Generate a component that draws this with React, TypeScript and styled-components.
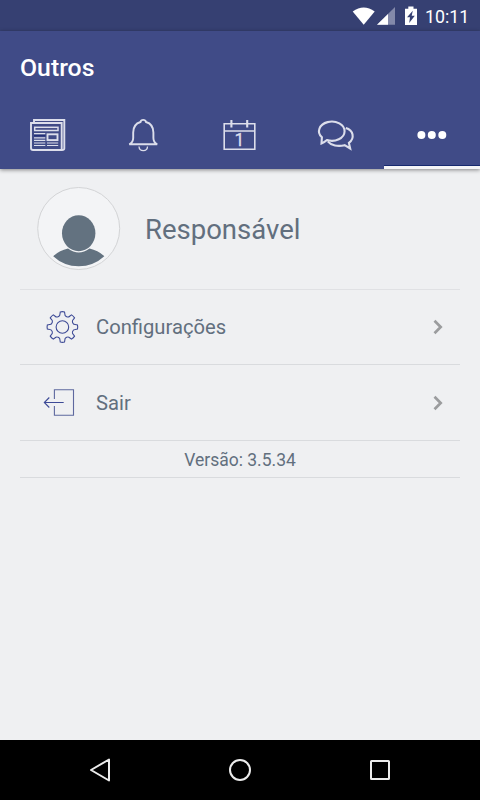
import React from "react";
import styled, { createGlobalStyle } from "styled-components";

const GlobalStyle = createGlobalStyle`
  * { box-sizing: border-box; }
  body { margin: 0; background: #eff0f2; font-family: Roboto, "Noto Sans", sans-serif; }
  svg { display: block; flex: none; }
`;

const Screen = styled.div`
  width: 480px;
  height: 800px;
  display: flex;
  flex-direction: column;
  background: #eff0f2;
  color: #626f7e;
  overflow: hidden;
`;

const StatusBar = styled.div`
  height: 31px;
  flex: none;
  display: flex;
  align-items: center;
  justify-content: flex-end;
  padding-right: 11px;
  background: #364072;
`;

const Clock = styled.time`
  width: 44px;
  margin-left: 7px;
  padding-top: 2px;
  font-size: 17.8px;
  font-weight: 400;
  line-height: 22px;
  color: #fff;
  white-space: nowrap;
`;

const Header = styled.header`
  height: 138px;
  flex: none;
  background: #404b87;
  box-shadow: 0 1px 4px rgba(0, 0, 0, 0.45);
`;

const Title = styled.h1`
  margin: 0;
  height: 71px;
  padding: 1px 20px 0;
  line-height: 71px;
  font-size: 24.8px;
  font-weight: 500;
  color: #fff;
`;

const Tabs = styled.nav`
  display: flex;
  height: 67px;
`;

const Tab = styled.div<{ $active?: boolean }>`
  flex: 1;
  display: flex;
  justify-content: center;
  padding-top: 13px;
  border-bottom: ${(p) => (p.$active ? "3px solid #f5f5f6" : "none")};
  box-shadow: ${(p) => (p.$active ? "inset 0 -1px #17296e" : "none")};
`;

const Content = styled.main`
  flex: 1;
  padding: 0 20px;
`;

const Profile = styled.section`
  height: 121px;
  display: flex;
  padding: 18px 0 0 17px;
  border-bottom: 1px solid #e0e1e4;
`;

const Name = styled.div`
  margin: 25px 0 0 24px;
  font-size: 27.5px;
  line-height: 36px;
`;

const Row = styled.div<{ $height: number }>`
  height: ${(p) => p.$height}px;
  display: flex;
  align-items: center;
  padding: 0 14px 0 22px;
  border-bottom: 1px solid #d9dbde;
`;

const RowLabel = styled.span`
  flex: 1;
  margin-left: 14px;
  font-size: 20.2px;
  line-height: 26px;
`;

const Version = styled.div`
  height: 37px;
  padding-top: 1px;
  border-bottom: 1px solid #d9dbde;
  text-align: center;
  font-size: 17.5px;
  line-height: 36px;
`;

const NavBar = styled.footer`
  height: 60px;
  flex: none;
  display: flex;
  justify-content: space-around;
  align-items: center;
  padding: 0 30px;
  background: #000;
`;

const TabIcon = ({ children }: { children: React.ReactNode }) => (
  <svg width="40" height="40" viewBox="0 0 40 40" fill="none" stroke="#dcdeeb" strokeWidth="1.9">
    {children}
  </svg>
);

const gearPath = (() => {
  const point = (r: number, deg: number) => {
    const a = (deg * Math.PI) / 180;
    return `${(20.4 + r * Math.sin(a)).toFixed(2)} ${(20 - r * Math.cos(a)).toFixed(2)}`;
  };
  let d = `M${point(15.2, -8)}`;
  for (let i = 0; i < 8; i++) {
    const c = i * 45;
    d += `Q${point(15.6, c)} ${point(15.2, c + 8)}`;
    d += `L${point(13, c + 11)}`;
    d += `Q${point(11.4, c + 13)} ${point(11.3, c + 18)}`;
    d += `Q${point(11, c + 22.5)} ${point(11.3, c + 27)}`;
    d += `Q${point(11.4, c + 32)} ${point(13, c + 34)}`;
    d += `L${point(15.2, c + 37)}`;
  }
  return d + "Z";
})();

const Chevron = () => (
  <svg width="16" height="20" viewBox="0 0 16 20" fill="none" stroke="#9b9c9e" strokeWidth="2.7">
    <path d="M4.5 3.7 10.7 10 4.5 16.3" />
  </svg>
);

export default function App() {
  return (
    <>
      <GlobalStyle />
      <Screen>
        <StatusBar>
          <svg width="66" height="24" viewBox="0 0 66 24">
            <path d="M.7 7.4Q11.7-.4 22.7 7.4L11.7 20.8Z" fill="#fff" />
            <path d="M43 3V20.8H25Z" fill="#8389aa" />
            <path d="M36 10V20.8H25Z" fill="#fff" />
            <path
              d="M53 4.7h3.3V2.5h5.2v2.2H65v16.3H53Z M60.8 6.7 55 13.2h3l-.8 5.8 5.6-7.2h-3.1Z"
              fill="#fff"
              fillRule="evenodd"
            />
          </svg>
          <Clock>10:11</Clock>
        </StatusBar>

        <Header>
          <Title>Outros</Title>
          <Tabs>
            <Tab>
              <TabIcon>
                <path d="M6 7V5H36.3V33.5Q36.3 35 34 35H5Q3 35 3 33V8H33.7V35" />
                <rect x="6.7" y="12.3" width="23.3" height="3.2" strokeWidth="1.5" />
                <rect x="19.5" y="19.3" width="10" height="5.8" />
                <path d="M6 18.6H17.3M6 22.8H17.3" strokeWidth="1.2" />
                <path d="M6 20.7H17.3" stroke="#202d78" strokeWidth="1.2" />
                <path d="M6 25.3H17.3M6 28H17.3M19 28H30.2M6 30.5H17.3M19 30.5H30.2" strokeWidth="1.2" />
              </TabIcon>
            </Tab>
            <Tab>
              <TabIcon>
                <path d="M5.3 29.3H33.2Q29.4 27.2 29.4 23V17.5Q29.4 9.2 22 7Q21.5 4.9 19.2 4.9T16.5 7Q9.2 9.2 9.2 17.5V23Q9.2 27.2 5.3 29.3Z" />
                <path d="M15 31.5C15.3 37 23.3 37 23.5 31.5" strokeWidth="1.3" />
              </TabIcon>
            </Tab>
            <Tab>
              <TabIcon>
                <path d="M4.2 8.8H34.8V34.2H4.2ZM4.2 16H34.8" strokeWidth="1.6" />
                <path d="M11.4 5V12.4M27.2 5V12.4" strokeWidth="2.1" />
                <text x="19.4" y="30.9" textAnchor="middle" fontSize="17.5" fontFamily="Roboto" fill="#dcdeeb" stroke="#dcdeeb" strokeWidth=".3">
                  1
                </text>
              </TabIcon>
            </Tab>
            <Tab>
              <TabIcon>
                <path d="M5.5 28.4 5.9 22.3A12.8 9.6 0 1 1 11 25.1Q8.5 27.4 5.5 28.4Z" strokeWidth="2.1" />
                <path d="M29.8 12.9C37.5 15 39 23.3 32.9 27.9L34.2 33.5 28.6 30.2C22 31.8 15 30.6 11.8 26.4" strokeWidth="2.1" />
              </TabIcon>
            </Tab>
            <Tab $active>
              <TabIcon>
                <g fill="#fff" stroke="none">
                  <circle cx="9.4" cy="20" r="4" />
                  <circle cx="19.8" cy="20" r="4" />
                  <circle cx="30.3" cy="20" r="4" />
                </g>
              </TabIcon>
            </Tab>
          </Tabs>
        </Header>

        <Content>
          <Profile>
            <svg width="84" height="84" viewBox="0 0 84 84">
              <circle cx="41.7" cy="41.5" r="41" fill="#f3f4f6" stroke="#d3d4d6" />
              <path d="M16.2 69.2Q22.5 63.5 31 61.6Q41.7 69.5 52.5 61.6Q61 63.5 67.3 69.2Q56.5 79.2 41.7 79.2T16.2 69.2Z" fill="#637280" />
              <ellipse cx="41.7" cy="46.2" rx="16.7" ry="18" fill="#637280" />
            </svg>
            <Name>Responsável</Name>
          </Profile>
          <Row $height={75}>
            <svg width="40" height="40" viewBox="0 0 40 40" fill="none" stroke="#3d4a96" strokeWidth="1.1">
              <path d={gearPath} />
              <circle cx="20.4" cy="20" r="6.3" />
            </svg>
            <RowLabel>Configurações</RowLabel>
            <Chevron />
          </Row>
          <Row $height={76}>
            <svg width="40" height="40" viewBox="0 0 40 40" fill="none" stroke="#3d4a96" strokeWidth="1.1">
              <path d="M12.4 16V6.8H31.5V32.2H12.4V23" stroke="#5e689f" />
              <path d="M21.7 19.5H2.5M7.3 14.5 2.3 19.5 7.3 24.5" />
            </svg>
            <RowLabel>Sair</RowLabel>
            <Chevron />
          </Row>
          <Version>Versão: 3.5.34</Version>
        </Content>

        <NavBar>
          <svg width="24" height="26" viewBox="0 0 24 26" fill="none" stroke="#ececec" strokeWidth="2">
            <path d="M21 2.5V23.5L3 13Z" strokeLinejoin="round" />
          </svg>
          <svg width="24" height="24" viewBox="0 0 24 24" fill="none" stroke="#ececec" strokeWidth="2">
            <circle cx="12" cy="12" r="10" />
          </svg>
          <svg width="24" height="24" viewBox="0 0 24 24" fill="none" stroke="#ececec" strokeWidth="2">
            <rect x="3" y="3" width="18" height="18" rx=".5" />
          </svg>
        </NavBar>
      </Screen>
    </>
  );
}
